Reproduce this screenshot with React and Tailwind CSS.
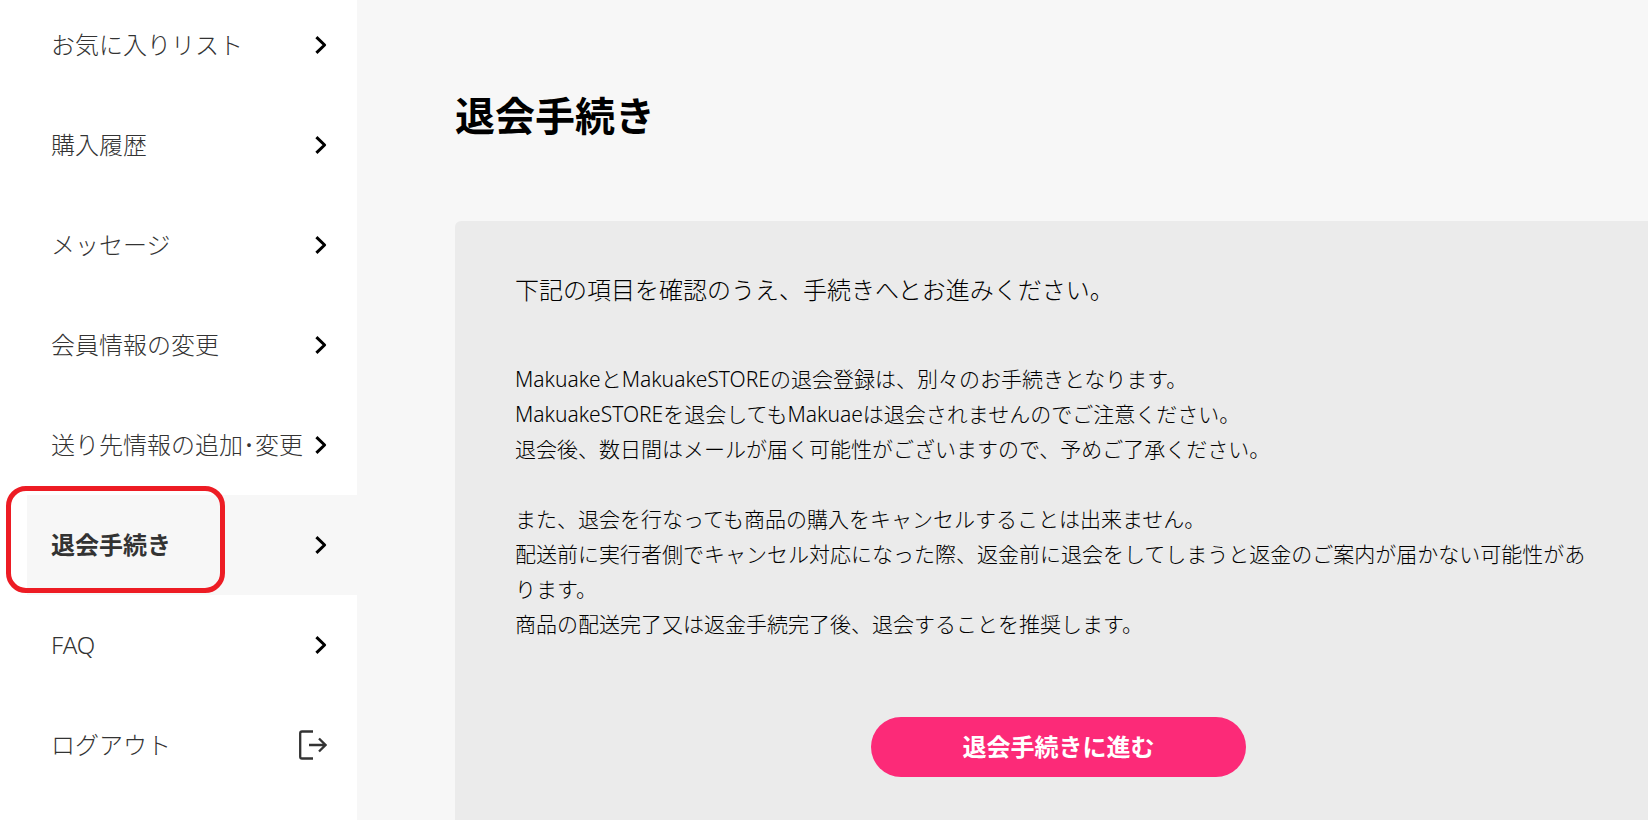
import React from 'react';
import clsx from 'clsx';

const menuItems = [
  { label: 'お気に入りリスト', href: '#favorites' },
  { label: '購入履歴', href: '#history' },
  { label: 'メッセージ', href: '#messages' },
  { label: '会員情報の変更', href: '#profile' },
  { label: '送り先情報の追加･変更', href: '#address' },
  { label: '退会手続き', href: '#withdraw', active: true },
  { label: 'FAQ', href: '#faq' },
  { label: 'ログアウト', href: '#logout', icon: 'logout' }
];

const ChevronIcon = () => (
  <svg width="12" height="18" viewBox="0 0 12 18" fill="none" stroke="#000" strokeWidth="3" aria-hidden="true">
    <path d="M1.4 1.1L9.6 9L1.4 16.9" strokeLinejoin="round" />
  </svg>
);

const LogoutIcon = () => (
  <svg width="28" height="30" viewBox="0 0 28 30" fill="none" stroke="#333" strokeWidth="2.3" aria-hidden="true">
    <path d="M14 1.5H3Q1.2 1.5 1.2 3.3V26.7Q1.2 28.5 3 28.5H14" />
    <path d="M10 15H26.5M20 8.5L26.5 15L20 21.5" />
  </svg>
);

const Sidebar = () => (
  <aside className="w-[357px] shrink-0 bg-white pl-[27px]">
    <nav className="-mt-[5px]">
      <ul>
        {menuItems.map((item) => (
          <li key={item.label} className="relative">
            <a
              href={item.href}
              aria-current={item.active ? 'page' : undefined}
              className={clsx(
                'flex h-[100px] items-center justify-between pl-6 pr-[30px] text-2xl whitespace-nowrap text-[#333]',
                item.active ? 'bg-[#f7f7f7] font-bold' : 'font-light'
              )}
            >
              <span>{item.label}</span>
              {item.icon === 'logout' ? <LogoutIcon /> : <ChevronIcon />}
            </a>
            {/* Red frame around the current item */}
            {item.active && (
              <div className="pointer-events-none absolute -left-[21px] -top-[9px] h-[107px] w-[219px] rounded-[20px] border-5 border-[#ed1c24]" />
            )}
          </li>
        ))}
      </ul>
    </nav>
  </aside>
);

const App = () => {
  return (
    <div className="flex h-screen overflow-hidden bg-[#f7f7f7] font-['Noto_Sans','Noto_Sans_CJK_JP',sans-serif]" lang="ja">
      <Sidebar />

      <main className="flex min-w-0 flex-1 flex-col pl-[98px] pt-[86px] text-black">
        <h1 className="text-[40px] leading-[60px] font-bold">退会手続き</h1>

        <section className="mt-[75px] flex-1 rounded-tl-md bg-[#ebebeb] pt-[51px] pr-[46px] pl-[60px] font-light">
          <p className="text-2xl leading-9">下記の項目を確認のうえ、手続きへとお進みください。</p>

          <div className="mt-[54px] text-[21px] leading-[35px]">
            <p>
              MakuakeとMakuakeSTOREの退会登録は、別々のお手続きとなります。
              <br />
              MakuakeSTOREを退会してもMakuaeは退会されませんのでご注意ください。
              <br />
              退会後、数日間はメールが届く可能性がございますので、予めご了承ください。
            </p>
            <p className="mt-[35px]">
              また、退会を行なっても商品の購入をキャンセルすることは出来ません。
              <br />
              配送前に実行者側でキャンセル対応になった際、返金前に退会をしてしまうと返金のご案内が届かない可能性があります。
              <br />
              商品の配送完了又は返金手続完了後、退会することを推奨します。
            </p>
          </div>

          <div className="mt-[75px] flex justify-center">
            <button type="button" className="h-[60px] w-[375px] rounded-full bg-[#fc2a78] text-2xl font-bold text-white">
              退会手続きに進む
            </button>
          </div>
        </section>
      </main>
    </div>
  );
};

export default App;
